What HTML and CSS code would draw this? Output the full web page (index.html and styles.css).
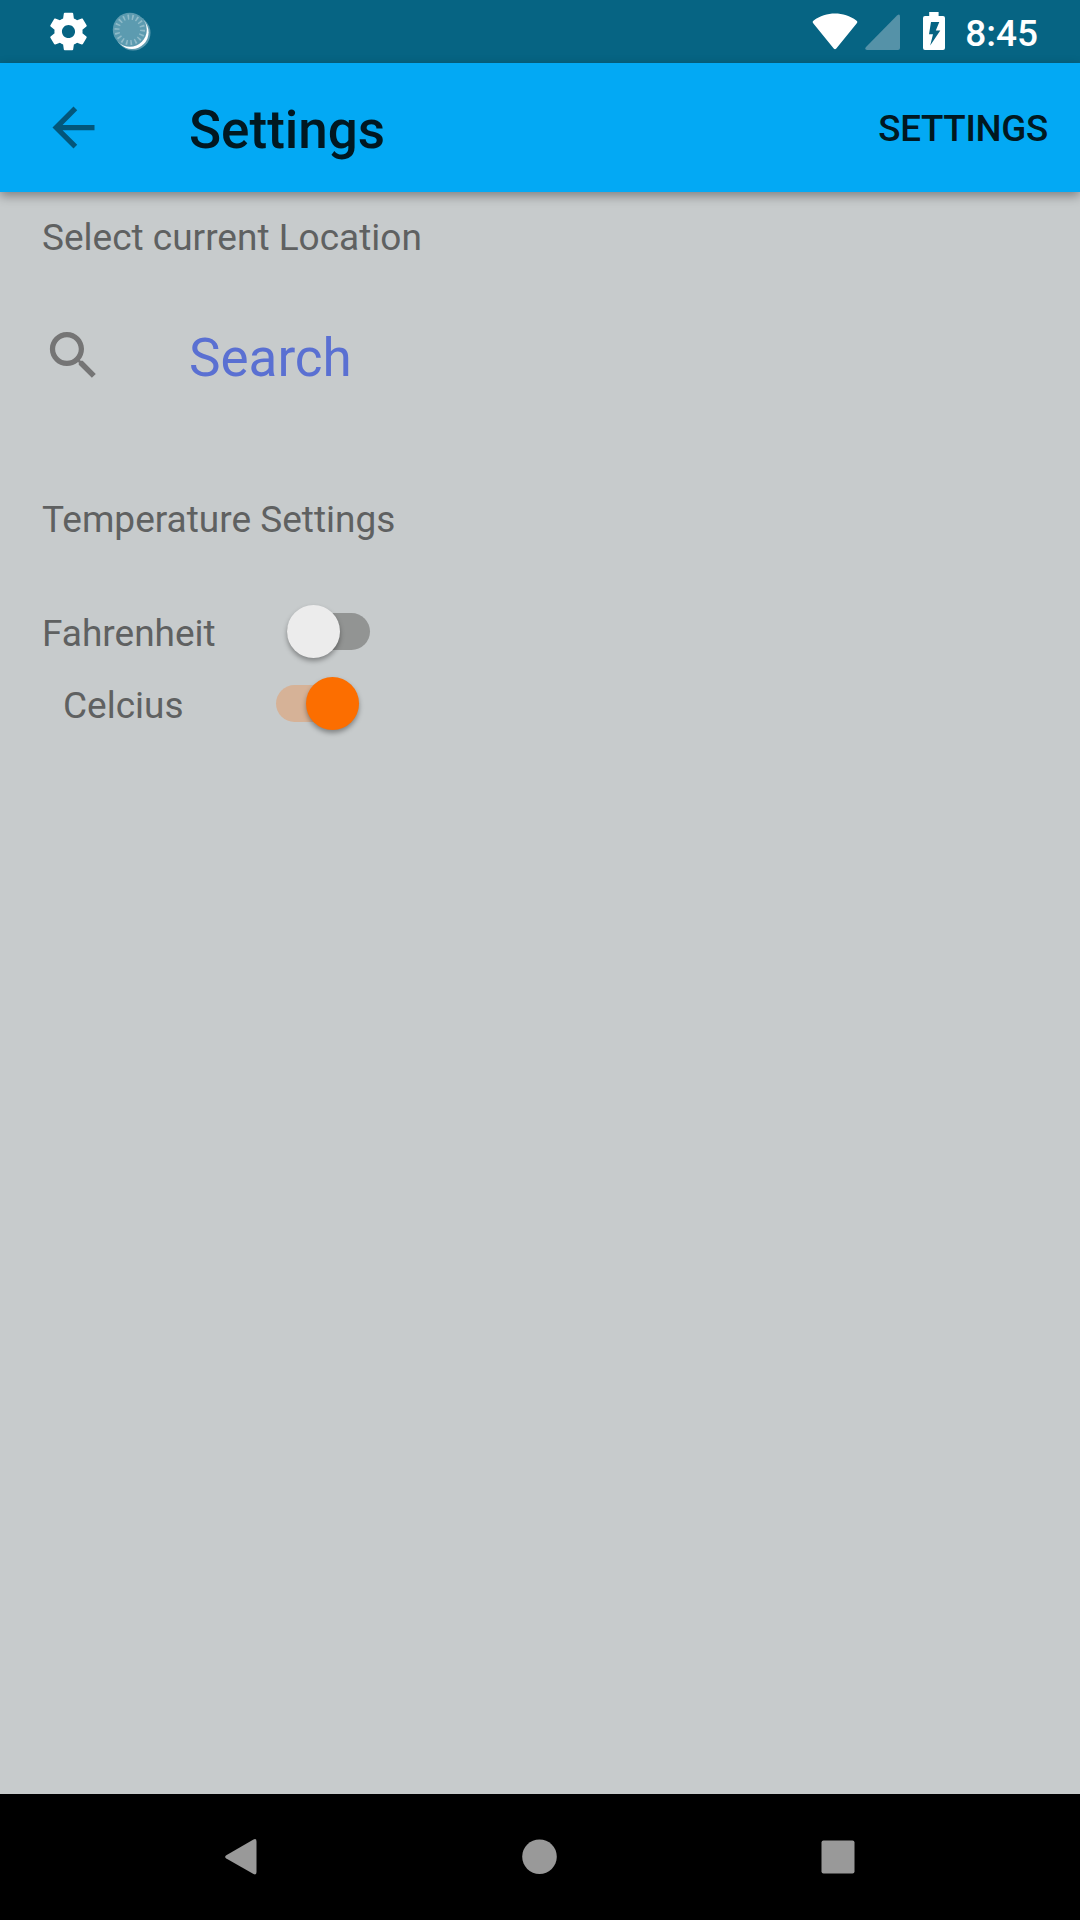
FILE: index.html
```html
<!DOCTYPE html>
<html lang="en">
<head>
<meta charset="utf-8">
<title>Settings</title>
<link rel="stylesheet" href="styles.css">
</head>
<body>
<header class="status-bar">
  <svg class="status-gear" viewBox="0 0 24 24"><path d="M19.43 12.98c.04-.32.07-.64.07-.98s-.03-.66-.07-.98l2.11-1.65c.19-.15.24-.42.12-.64l-2-3.46c-.12-.22-.39-.3-.61-.22l-2.49 1c-.52-.4-1.08-.73-1.69-.98l-.38-2.65C14.46 2.18 14.25 2 14 2h-4c-.25 0-.46.18-.49.42l-.38 2.65c-.61.25-1.17.59-1.69.98l-2.49-1c-.23-.09-.49 0-.61.22l-2 3.46c-.13.22-.07.49.12.64l2.11 1.65c-.04.32-.07.65-.07.98s.03.66.07.98l-2.11 1.65c-.19.15-.24.42-.12.64l2 3.46c.12.22.39.3.61.22l2.49-1c.52.4 1.08.73 1.69.98l.38 2.65c.03.24.24.42.49.42h4c.25 0 .46-.18.49-.42l.38-2.65c.61-.25 1.17-.59 1.69-.98l2.49 1c.23.09.49 0 .61-.22l2-3.46c.12-.22.07-.49-.12-.64l-2.11-1.65zM12 15.5c-1.93 0-3.5-1.57-3.5-3.5s1.57-3.5 3.5-3.5 3.5 1.57 3.5 3.5-1.57 3.5-3.5 3.5z"/></svg>
  <svg class="status-sync" viewBox="0 0 40 40">
    <circle cx="22" cy="21" r="17.5" fill="#5c9bb0"/>
    <circle cx="21" cy="20.3" r="16.6" fill="#fff"/>
    <circle cx="18.8" cy="17.8" r="17" fill="#5c9bb0"/>
    <circle class="rays" cx="18.8" cy="17.8" r="12.8" pathLength="100"/>
  </svg>
  <div class="status-right">
    <svg class="wifi" viewBox="0 0 46 37"><path d="M1.2 10.2Q-.1 8.6 1.7 7.4C14-1.8 32-1.8 44.3 7.4q1.8 1.2.5 2.8L24.3 35.5q-1.3 1.5-2.6 0z"/></svg>
    <svg class="signal" viewBox="0 0 35 36"><path d="M1 33 32 1.5Q35-.8 35 2.5V34q0 2-2 2H2Q-1 35.5 1 33z"/></svg>
    <svg class="battery" viewBox="0 0 22 38"><path fill-rule="evenodd" d="M6.2 0h9.4v4H20q2 0 2 2v30q0 2-2 2H2q-2 0-2-2V6q0-2 2-2h4.200zM8 10 6 22.200h4L7.200 33.500 17.300 18.500h-4.500L16.300 10z"/></svg>
    <span class="clock">8:45</span>
  </div>
</header>
<nav class="toolbar">
  <svg class="icon back" viewBox="0 0 24 24"><path d="M20 11H7.830l5.590-5.590L12 4l-8 8 8 8 1.410-1.410L7.830 13H20v-2z"/></svg>
  <h1 class="title">Settings</h1>
  <span class="action">SETTINGS</span>
</nav>
<main class="content">
  <h2 class="label">Select current Location</h2>
  <div class="search">
    <svg class="icon glass" viewBox="0 0 24 24"><path d="M15.500 14h-.79l-.28-.27C15.410 12.590 16 11.110 16 9.500 16 5.910 13.090 3 9.500 3S3 5.910 3 9.500 5.910 16 9.500 16c1.610 0 3.090-.59 4.230-1.570l.27.28v.79l5 4.990L20.490 19l-4.990-5zm-6 0C7.010 14 5 11.990 5 9.500S7.010 5 9.500 5 14 7.010 14 9.500 11.990 14 9.500 14z"/></svg>
    <span class="search-text">Search</span>
  </div>
  <h2 class="label">Temperature Settings</h2>
  <div class="option fahrenheit"><span>Fahrenheit</span><div class="switch"><div class="thumb"></div></div></div>
  <div class="option celcius"><span>Celcius</span><div class="switch on"><div class="thumb"></div></div></div>
</main>
<footer class="nav-bar">
  <svg viewBox="0 0 48 48"><path d="M9.300 22.300 36.500 6.500Q39.500 5 39.500 8.500v30.500q0 3.500-3 2L9.300 25.500q-2.300-1.600 0-3.200z"/></svg>
  <svg viewBox="0 0 48 48"><circle cx="23.500" cy="23.700" r="17.300"/></svg>
  <svg viewBox="0 0 48 48"><rect x="7.500" y="7.500" width="33" height="33" rx="2"/></svg>
</footer>
</body>
</html>
```
FILE: styles.css
```css
* { box-sizing: border-box; }
body {
  margin: 0;
  height: 1920px;
  display: flex;
  flex-direction: column;
  background: #c7cbcc;
  font: 400 37px/43px Roboto, "Liberation Sans", sans-serif;
  color: #5f6161;
  overflow: hidden;
}
svg { display: block; flex: none; }
h1, h2 { margin: 0; font-weight: 400; font-size: inherit; }

.status-bar {
  height: 63px;
  flex: none;
  display: flex;
  align-items: flex-start;
  padding: 0 42px 0 46px;
  background: #066483;
  color: #fff;
  fill: #fff;
}
.status-gear { width: 45px; height: 45px; margin-top: 9px; }
.status-sync { width: 40px; height: 40px; margin: 12px 0 0 20px; }
.rays { fill: none; stroke: #8fbbc9; stroke-width: 5; stroke-dasharray: 2 3.555; }
.status-right { display: flex; margin-left: auto; }
.wifi { width: 46px; height: 37px; margin: 13px 7px 0 0; }
.signal { width: 35px; height: 36px; margin: 14px 23px 0 0; fill: #5592a8; }
.battery { width: 22px; height: 38px; margin: 12px 20px 0 0; }
.clock { font-weight: 500; margin-top: 12px; }

.toolbar {
  height: 129px;
  flex: none;
  display: flex;
  align-items: center;
  padding: 0 32px 0 42px;
  background: #03a9f4;
  color: #011821;
  font-weight: 500;
  box-shadow: 0 4px 10px rgba(0, 0, 0, .36);
}
.icon { width: 63px; height: 63px; }
.back { fill: #03567a; }
.title { margin-left: 84px; font-size: 53px; line-height: 62px; font-weight: 500; padding-top: 4px; }
.action { margin-left: auto; padding-top: 2px; font-size: 36.75px; letter-spacing: -.3px; }

.content { flex: 1; padding: 24px 42px 0; }
.search { display: flex; align-items: center; height: 63px; margin: 65px 0 111px; }
.glass { fill: #757575; }
.search-text { margin-left: 84px; padding-top: 4px; color: #5a70d2; font-size: 53px; line-height: 62px; }
.option { display: flex; align-items: center; height: 72px; }
.fahrenheit { margin-top: 54px; }
.option span { padding-top: 5px; }
.fahrenheit span { width: 245px; }
.celcius { padding-left: 21px; }
.celcius span { width: 213px; }
.switch {
  width: 83px;
  height: 37px;
  display: flex;
  align-items: center;
  border-radius: 19px;
  background: #929493;
}
.thumb {
  flex: none;
  width: 53px;
  height: 53px;
  border-radius: 50%;
  background: #ececec;
  box-shadow: 0 3px 5px rgba(0, 0, 0, .35);
}
.switch.on { justify-content: flex-end; background: #d6b297; }
.on .thumb { background: #fc6e00; }

.nav-bar {
  height: 126px;
  flex: none;
  display: flex;
  justify-content: space-between;
  align-items: center;
  padding: 0 218px 0 217px;
  background: #000;
  fill: #999;
}
.nav-bar svg { width: 48px; height: 48px; }
```
